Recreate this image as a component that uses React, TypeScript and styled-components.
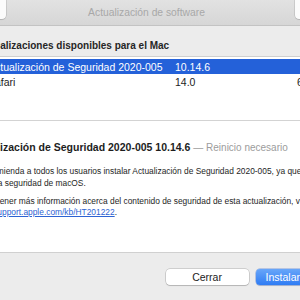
import React from 'react'
import styled, { createGlobalStyle } from 'styled-components'

const GlobalStyle = createGlobalStyle`
    html, body {
        margin: 0;
        padding: 0;
        background: #ececec;
    }
    body {
        font-family: "Liberation Sans", Arial, sans-serif;
        -webkit-font-smoothing: antialiased;
    }
`

const Screen = styled.div`
    width: 300px;
    height: 300px;
    overflow: hidden;
    background: #ececec;
`

const Window = styled.div`
    width: 413px;
    height: 300px;
    margin-left: -60px;
    display: flex;
    flex-direction: column;
`

const Toolbar = styled.div`
    flex: none;
    height: 25px;
    padding: 0 8px;
    display: grid;
    grid-template-columns: 1fr auto 1fr;
    align-items: center;
    background: linear-gradient(#e2e2e2, #d6d6d6);
    border-bottom: 1px solid #c3c3c3;
`

const ToolButton = styled.div<{ $w: number; $end?: boolean }>`
    width: ${(p) => p.$w}px;
    height: 23px;
    margin-top: -4px;
    align-self: start;
    justify-self: ${(p) => (p.$end ? 'end' : 'start')};
    background: #fbfbfb;
    border-radius: 4px;
    box-shadow: 0 0 0 0.5px rgba(0, 0, 0, 0.18), 0 1px 1px rgba(0, 0, 0, 0.08);
`

const WindowTitle = styled.div`
    font-size: 10.3px;
    color: #a8a8a8;
    white-space: nowrap;
`

const SectionHeader = styled.div`
    flex: none;
    height: 30px;
    box-sizing: border-box;
    padding: 14px 0 0 38px;
    line-height: 12px;
    font-size: 10px;
    font-weight: bold;
    color: #262626;
    white-space: nowrap;
`

const List = styled.div`
    flex: none;
    height: 64px;
    box-sizing: border-box;
    padding-top: 2px;
    background: #fff;
    border-top: 1px solid #cfcfcf;
`

const Row = styled.div<{ $selected?: boolean }>`
    height: 15px;
    padding: 0 17px 0 48px;
    display: grid;
    grid-template-columns: 187px 1fr auto;
    align-items: center;
    font-size: 10.5px;
    white-space: nowrap;
    background: ${(p) => (p.$selected ? '#2461d9' : 'transparent')};
    color: ${(p) => (p.$selected ? '#fff' : '#1d1d1d')};
`

const Size = styled.span`
    text-align: right;
`

const Divider = styled.div`
    flex: none;
    height: 1px;
    background: #d3d3d3;
`

const Details = styled.div`
    flex: 1;
    background: #fff;
    padding: 19px 0 0 28px;
    white-space: nowrap;
`

const DetailTitle = styled.div`
    font-size: 10.5px;
    line-height: 14px;
    font-weight: bold;
    color: #1d1d1d;
`

const Note = styled.span`
    font-size: 10px;
    font-weight: normal;
    color: #9c9c9c;
`

const Body = styled.p`
    margin: 0 0 6.5px;
    font-size: 8.4px;
    line-height: 11.5px;
    color: #1e1e1e;
    &:first-of-type {
        margin-top: 11px;
    }
`

const Link = styled.a`
    color: #2d63d3;
    text-decoration: underline;
`

const Footer = styled.div`
    flex: none;
    height: 48px;
    box-sizing: border-box;
    padding: 16px 43px 0 0;
    border-top: 1px solid #d0d0d0;
    display: flex;
    justify-content: flex-end;
    align-items: flex-start;
    gap: 7px;
`

const Button = styled.div<{ $primary?: boolean }>`
    min-width: 54px;
    width: ${(p) => (p.$primary ? 'auto' : '83px')};
    padding: ${(p) => (p.$primary ? '0 10px' : '0')};
    box-sizing: border-box;
    height: 16px;
    border-radius: 4px;
    display: flex;
    align-items: center;
    justify-content: center;
    font-size: 10.5px;
    white-space: nowrap;
    color: ${(p) => (p.$primary ? '#fff' : '#222')};
    background: ${(p) => (p.$primary ? 'linear-gradient(#68a6f9, #2f7cf4)' : '#fff')};
    box-shadow: ${(p) =>
        p.$primary
            ? '0 0 0 0.5px rgba(20, 80, 200, 0.5), 0 1px 1px rgba(0, 0, 0, 0.12)'
            : '0 0 0 0.5px rgba(0, 0, 0, 0.25), 0 1px 1px rgba(0, 0, 0, 0.12)'};
`

const updates = [
    { name: 'Actualización de Seguridad 2020-005', version: '10.14.6', size: '1,7 GB' },
    { name: 'Safari', version: '14.0', size: '66,8 MB' },
]

export default function App() {
    return (
        <Screen>
            <GlobalStyle />
            <Window>
                <Toolbar>
                    <ToolButton $w={58} />
                    <WindowTitle>Actualización de software</WindowTitle>
                    <ToolButton $w={50} $end />
                </Toolbar>
                <SectionHeader>Actualizaciones disponibles para el Mac</SectionHeader>
                <List>
                    {updates.map((u, i) => (
                        <Row key={u.name} $selected={i === 0}>
                            <span>{u.name}</span>
                            <span>{u.version}</span>
                            <Size>{u.size}</Size>
                        </Row>
                    ))}
                </List>
                <Divider />
                <Details>
                    <DetailTitle>
                        Actualización de Seguridad 2020-005 10.14.6 <Note>— Reinicio necesario</Note>
                    </DetailTitle>
                    <Body>
                        Se recomienda a todos los usuarios instalar Actualización de Seguridad 2020-005, ya que
                        <br />
                        mejora la seguridad de macOS.
                    </Body>
                    <Body>
                        Para obtener más información acerca del contenido de seguridad de esta actualización, visita
                        <br />
                        <Link href="#">https://support.apple.com/kb/HT201222</Link>.
                    </Body>
                </Details>
                <Footer>
                    <Button>Cerrar</Button>
                    <Button $primary>Instalar</Button>
                </Footer>
            </Window>
        </Screen>
    )
}
